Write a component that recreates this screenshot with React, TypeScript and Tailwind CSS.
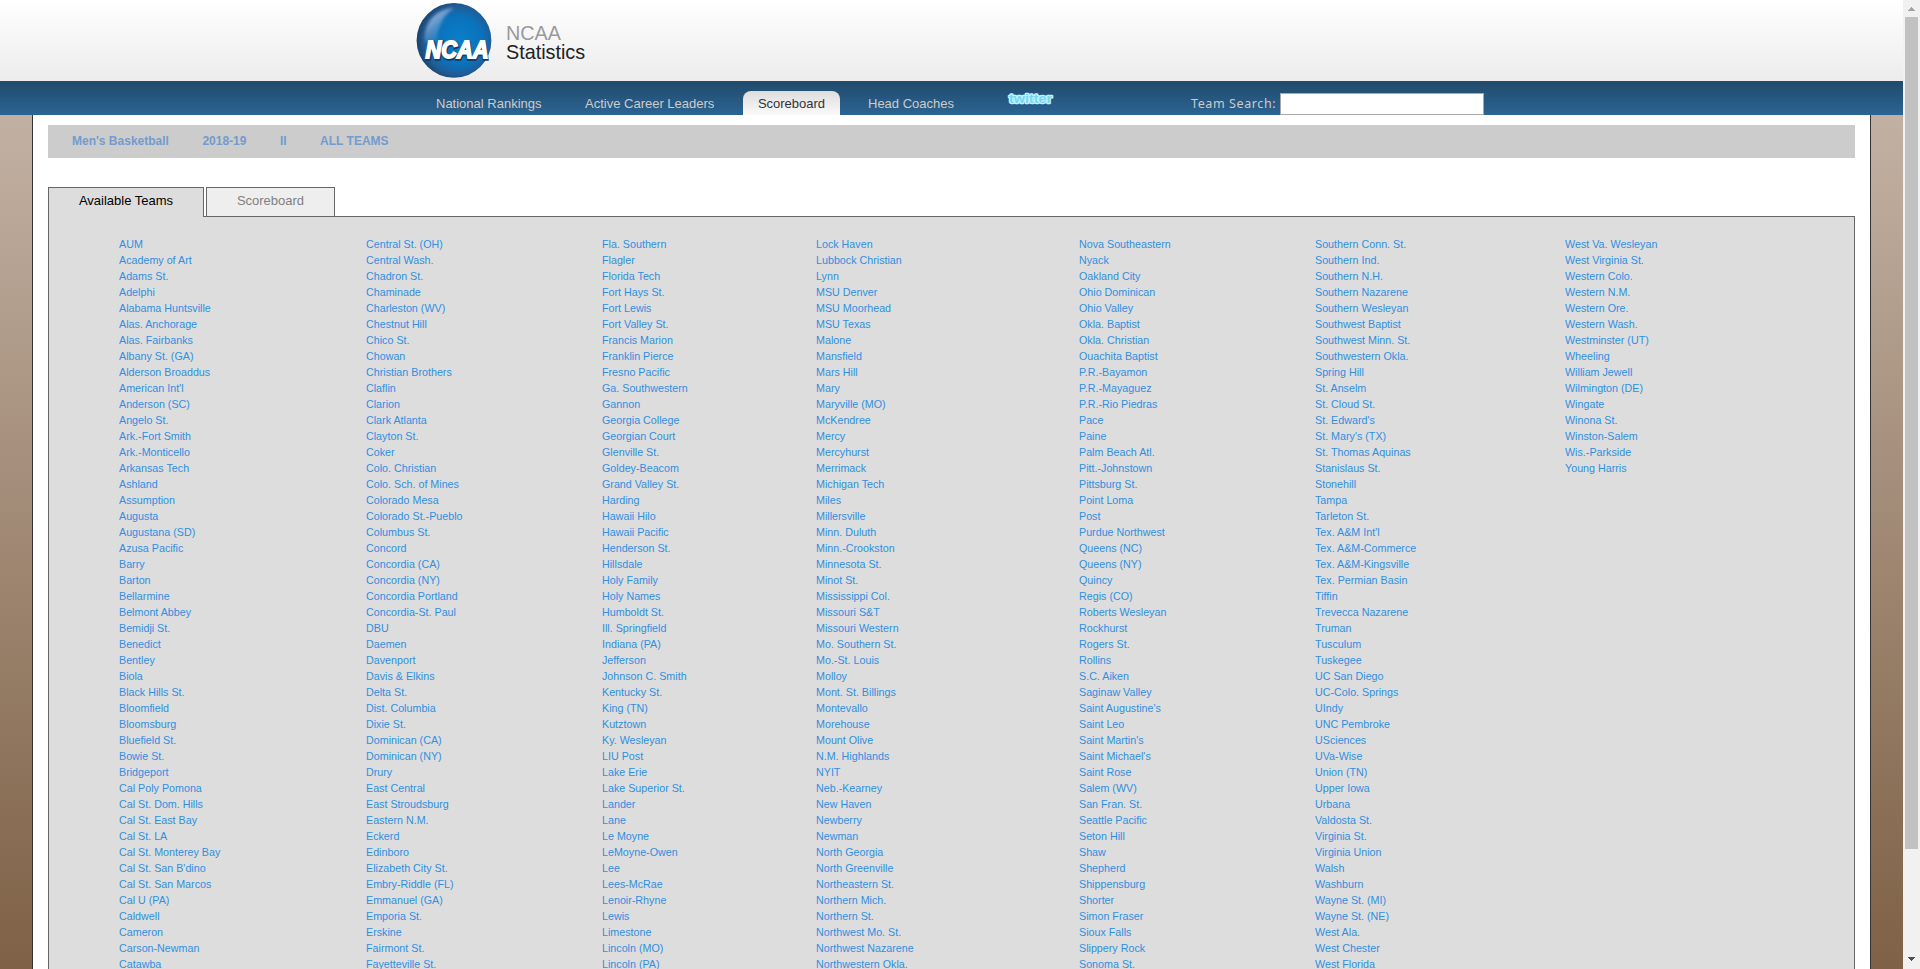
const columns: { width: string; teams: string }[] = [
  { width: 'w-[247px]', teams: "AUM|Academy of Art|Adams St.|Adelphi|Alabama Huntsville|Alas. Anchorage|Alas. Fairbanks|Albany St. (GA)|Alderson Broaddus|American Int'l|Anderson (SC)|Angelo St.|Ark.-Fort Smith|Ark.-Monticello|Arkansas Tech|Ashland|Assumption|Augusta|Augustana (SD)|Azusa Pacific|Barry|Barton|Bellarmine|Belmont Abbey|Bemidji St.|Benedict|Bentley|Biola|Black Hills St.|Bloomfield|Bloomsburg|Bluefield St.|Bowie St.|Bridgeport|Cal Poly Pomona|Cal St. Dom. Hills|Cal St. East Bay|Cal St. LA|Cal St. Monterey Bay|Cal St. San B'dino|Cal St. San Marcos|Cal U (PA)|Caldwell|Cameron|Carson-Newman|Catawba" },
  { width: 'w-[236px]', teams: "Central St. (OH)|Central Wash.|Chadron St.|Chaminade|Charleston (WV)|Chestnut Hill|Chico St.|Chowan|Christian Brothers|Claflin|Clarion|Clark Atlanta|Clayton St.|Coker|Colo. Christian|Colo. Sch. of Mines|Colorado Mesa|Colorado St.-Pueblo|Columbus St.|Concord|Concordia (CA)|Concordia (NY)|Concordia Portland|Concordia-St. Paul|DBU|Daemen|Davenport|Davis & Elkins|Delta St.|Dist. Columbia|Dixie St.|Dominican (CA)|Dominican (NY)|Drury|East Central|East Stroudsburg|Eastern N.M.|Eckerd|Edinboro|Elizabeth City St.|Embry-Riddle (FL)|Emmanuel (GA)|Emporia St.|Erskine|Fairmont St.|Fayetteville St." },
  { width: 'w-[214px]', teams: "Fla. Southern|Flagler|Florida Tech|Fort Hays St.|Fort Lewis|Fort Valley St.|Francis Marion|Franklin Pierce|Fresno Pacific|Ga. Southwestern|Gannon|Georgia College|Georgian Court|Glenville St.|Goldey-Beacom|Grand Valley St.|Harding|Hawaii Hilo|Hawaii Pacific|Henderson St.|Hillsdale|Holy Family|Holy Names|Humboldt St.|Ill. Springfield|Indiana (PA)|Jefferson|Johnson C. Smith|Kentucky St.|King (TN)|Kutztown|Ky. Wesleyan|LIU Post|Lake Erie|Lake Superior St.|Lander|Lane|Le Moyne|LeMoyne-Owen|Lee|Lees-McRae|Lenoir-Rhyne|Lewis|Limestone|Lincoln (MO)|Lincoln (PA)" },
  { width: 'w-[263px]', teams: "Lock Haven|Lubbock Christian|Lynn|MSU Denver|MSU Moorhead|MSU Texas|Malone|Mansfield|Mars Hill|Mary|Maryville (MO)|McKendree|Mercy|Mercyhurst|Merrimack|Michigan Tech|Miles|Millersville|Minn. Duluth|Minn.-Crookston|Minnesota St.|Minot St.|Mississippi Col.|Missouri S&T|Missouri Western|Mo. Southern St.|Mo.-St. Louis|Molloy|Mont. St. Billings|Montevallo|Morehouse|Mount Olive|N.M. Highlands|NYIT|Neb.-Kearney|New Haven|Newberry|Newman|North Georgia|North Greenville|Northeastern St.|Northern Mich.|Northern St.|Northwest Mo. St.|Northwest Nazarene|Northwestern Okla." },
  { width: 'w-[236px]', teams: "Nova Southeastern|Nyack|Oakland City|Ohio Dominican|Ohio Valley|Okla. Baptist|Okla. Christian|Ouachita Baptist|P.R.-Bayamon|P.R.-Mayaguez|P.R.-Rio Piedras|Pace|Paine|Palm Beach Atl.|Pitt.-Johnstown|Pittsburg St.|Point Loma|Post|Purdue Northwest|Queens (NC)|Queens (NY)|Quincy|Regis (CO)|Roberts Wesleyan|Rockhurst|Rogers St.|Rollins|S.C. Aiken|Saginaw Valley|Saint Augustine's|Saint Leo|Saint Martin's|Saint Michael's|Saint Rose|Salem (WV)|San Fran. St.|Seattle Pacific|Seton Hill|Shaw|Shepherd|Shippensburg|Shorter|Simon Fraser|Sioux Falls|Slippery Rock|Sonoma St." },
  { width: 'w-[250px]', teams: "Southern Conn. St.|Southern Ind.|Southern N.H.|Southern Nazarene|Southern Wesleyan|Southwest Baptist|Southwest Minn. St.|Southwestern Okla.|Spring Hill|St. Anselm|St. Cloud St.|St. Edward's|St. Mary's (TX)|St. Thomas Aquinas|Stanislaus St.|Stonehill|Tampa|Tarleton St.|Tex. A&M Int'l|Tex. A&M-Commerce|Tex. A&M-Kingsville|Tex. Permian Basin|Tiffin|Trevecca Nazarene|Truman|Tusculum|Tuskegee|UC San Diego|UC-Colo. Springs|UIndy|UNC Pembroke|USciences|UVa-Wise|Union (TN)|Upper Iowa|Urbana|Valdosta St.|Virginia St.|Virginia Union|Walsh|Washburn|Wayne St. (MI)|Wayne St. (NE)|West Ala.|West Chester|West Florida" },
  { width: 'w-[200px]', teams: "West Va. Wesleyan|West Virginia St.|Western Colo.|Western N.M.|Western Ore.|Western Wash.|Westminster (UT)|Wheeling|William Jewell|Wilmington (DE)|Wingate|Winona St.|Winston-Salem|Wis.-Parkside|Young Harris" },
];

function Logo() {
  return (
    <svg width="76" height="76" viewBox="0 0 76 76" className="shrink-0 overflow-visible">
      <defs>
        <radialGradient id="ball" cx="0.56" cy="0.5" r="0.54">
          <stop offset="0" stopColor="#0a7fca" />
          <stop offset="0.6" stopColor="#0a72ba" />
          <stop offset="0.85" stopColor="#205c96" />
          <stop offset="1" stopColor="#1c4670" />
        </radialGradient>
        <linearGradient id="shine" x1="0.2" y1="0.1" x2="0.7" y2="0.8">
          <stop offset="0" stopColor="#b4caec" stopOpacity="0.95" />
          <stop offset="1" stopColor="#6f9fd4" stopOpacity="0.15" />
        </linearGradient>
        <filter id="soft"><feGaussianBlur stdDeviation="1.8" /></filter>
      </defs>
      <circle cx="38" cy="38.4" r="37.4" fill="url(#ball)" />
      <path d="M9 40C7 22 19 7 38 6C28 13 21 24 21 40Z" fill="url(#shine)" filter="url(#soft)" />
      <g fontFamily="Liberation Sans, Arial, sans-serif" fontWeight="700" fontStyle="italic" fontSize="24" strokeLinejoin="miter">
        <text x="10.5" y="57" textLength="62" lengthAdjust="spacingAndGlyphs" fill="#123c68" stroke="#123c68" strokeWidth="3.4">NCAA</text>
        <text x="9.5" y="55.8" textLength="63" lengthAdjust="spacingAndGlyphs" fill="#fff" stroke="#fff" strokeWidth="1.8">NCAA</text>
      </g>
    </svg>
  );
}

export default function App() {
  return (
    <div className="flex h-[969px] w-full overflow-hidden bg-white font-['Liberation_Sans',Arial,sans-serif]">
      <div className="flex min-w-0 flex-1 flex-col">
        <header className="flex h-[81px] shrink-0 bg-linear-to-b from-white to-[#ececec] pt-[2px] pl-[416px]">
          <Logo />
          <div className="pt-[22px] pl-[14px] text-[19.8px] leading-[19px]">
            <div className="text-[#999]">NCAA</div>
            <div className="text-[#222]">Statistics</div>
          </div>
        </header>
        <nav className="flex h-[34px] shrink-0 items-end bg-linear-to-b from-[#214a6b] to-[#2b6493] pl-[422px] text-[13px] text-[#ccc]">
          <a className="h-6 w-[149px] pl-[14px] leading-[25px]">National Rankings</a>
          <a className="h-6 w-[172px] pl-[14px] leading-[25px]">Active Career Leaders</a>
          <a className="h-6 w-[97px] rounded-t-[8px] bg-linear-to-b from-[#ddd] to-[#fafafa] text-center leading-[25px] text-[#333]">Scoreboard</a>
          <a className="h-6 w-[167px] pl-[28px] leading-[25px]">Head Coaches</a>
          <svg width="50" height="26" className="overflow-visible">
            <g fontFamily="Liberation Sans, Arial, sans-serif" fontWeight="700" fontSize="12.5" strokeLinejoin="round">
              <text x="2" y="14" textLength="43" lengthAdjust="spacingAndGlyphs" fill="#c5f1ff" stroke="#c5f1ff" strokeWidth="2.4">twitter</text>
              <text x="2" y="14" textLength="43" lengthAdjust="spacingAndGlyphs" fill="#74d8f3">twitter</text>
            </g>
          </svg>
          <label className="flex h-6 items-end pl-[134px] font-['Noto_Sans',sans-serif]">
            <span className="w-[89px] text-[12.5px] leading-[23px] tracking-[0.6px] whitespace-nowrap">Team Search:</span>
            <input className="h-[22px] w-[204px] border border-[#a9a9a9] bg-white outline-none" />
          </label>
        </nav>
        <div className="flex min-h-0 flex-1 bg-linear-to-b from-[#c2b1a3] to-[#7e6146] px-8">
          <main className="flex min-w-0 flex-1 flex-col border-x border-[#333] bg-white px-[15px] pt-[10px]">
            <div className="flex h-[33px] shrink-0 gap-[33.5px] bg-[#ccc] pl-[24px] text-[12px] leading-[33px] font-bold text-[#739bce]">
              <a>Men's Basketball</a><a>2018-19</a><a>II</a><a>ALL TEAMS</a>
            </div>
            <div className="mt-[29px] flex h-[29px] shrink-0 gap-[2px] text-[13px] leading-[26px]">
              <div className="relative z-10 h-[30px] w-[156px] border border-b-0 border-[#666] bg-[#ddd] text-center text-black">Available Teams</div>
              <div className="w-[129px] border border-b-0 border-[#666] bg-[#eee] text-center text-[#808080]">Scoreboard</div>
            </div>
            <div className="flex min-h-0 flex-1 overflow-hidden border border-b-0 border-[#666] bg-[#ddd] pt-[19px] pl-[70px] text-[10.72px] leading-[16px] text-[#308fe0]">
              {columns.map((column, i) => (
                <ul key={i} className={`${column.width} shrink-0`}>
                  {column.teams.split('|').map((team) => (
                    <li key={team}><a>{team}</a></li>
                  ))}
                </ul>
              ))}
            </div>
          </main>
        </div>
      </div>
      <div className="flex w-[17px] shrink-0 flex-col items-center bg-[#f1f1f1]">
        <svg width="17" height="17" fill="#a3a3a3"><path d="M8 7h1v1h1v1h1v1h1v1H5v-1h1V9h1V8h1z" /></svg>
        <div className="h-[832px] w-[13px] bg-[#c1c1c1]" />
        <svg width="17" height="17" className="mt-auto" fill="#505050"><path d="M5 5h7v1h-1v1h-1v1H9v1H8v-1H7V7H6V6H5z" /></svg>
      </div>
    </div>
  );
}
